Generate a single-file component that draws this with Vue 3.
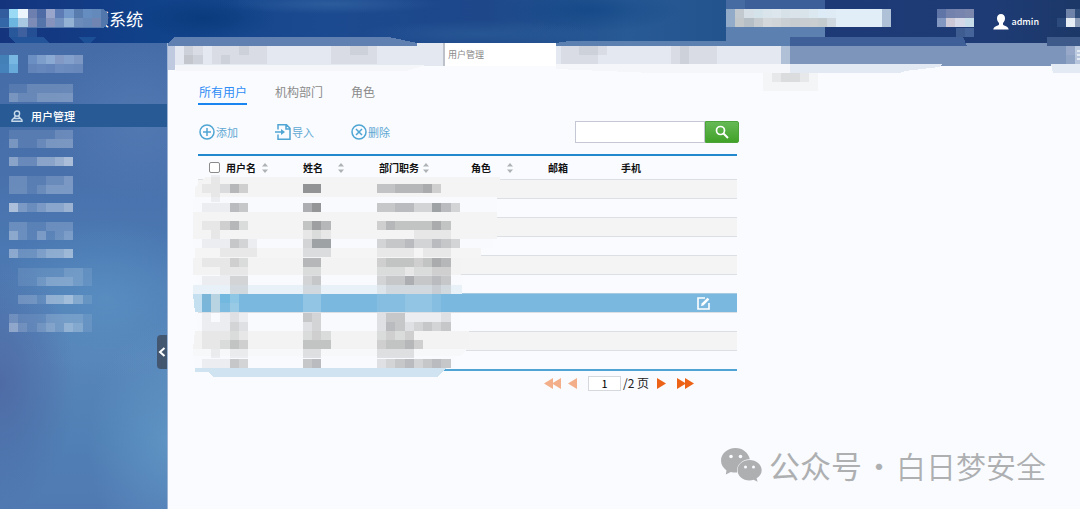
<template>
  <div class="app">
    <header class="header">
      <h1 class="title">版系统</h1>
      <a href="#" class="account">
        <svg class="avatar" viewBox="0 0 16 16">
          <path d="M8 0C5.500 0 4 1.800 4 4.300c0 2 .8 3.600 2 4.600v1.500C5.500 12 .5 11.800.3 15.500h15.400C15.500 11.800 10.500 12 10 10.400V8.900c1.200-1 2-2.600 2-4.600C12 1.800 10.500 0 8 0z" fill="#fff" />
        </svg>
        admin
      </a>
    </header>

    <!-- скрытые части шапки и вкладок -->
    <svg class="mask mask-brand" width="168" height="46" shape-rendering="crispEdges">
      <path d="M0 9h104l4 5v9l-4 5H0z" fill="#5277ad" />
      <path d="M9 37h35l5 6h14l2 2H18z" fill="#23549a" />
      <path d="M79 37h18l-10 9z" fill="#1c5096" />
      <rect v-for="(c, i) in cells(brandMask)" :key="i" v-bind="c" />
    </svg>
    <svg class="mask mask-tabs" width="290" height="42" shape-rendering="crispEdges">
      <path d="M5 11L15 2h214l28 6v3z" fill="#5f80b1" />
      <path d="M5 11h10v24H5z" fill="#bfcae0" />
      <path d="M15 30h251l-20 6H16z" fill="#f5f6f9" />
      <rect v-for="(c, i) in cells(tabMask)" :key="i" v-bind="c" />
    </svg>
    <svg class="mask mask-right" width="527" height="92" shape-rendering="crispEdges">
      <path d="M3 43L16 41H173V0h99v37h-35v9H3z" fill="#5c80b0" />
      <path d="M173 0h19v9h-19z" fill="#456ba2" />
      <path d="M192 0h80v9h-80z" fill="#3c5f99" />
      <path d="M237 37h173l4 9H237z" fill="#3f5f98" />
      <path d="M494 37h33v9h-33z" fill="#3d5a8b" />
      <path d="M237 64h152l-3 3-34 4-5 2H237z" fill="#e3e9f3" />
      <path d="M498 64h29v9h-27z" fill="#e4eaf3" />
      <path d="M3 64h234v9H100l-97-4z" fill="#f5f6fa" />
      <path d="M210 73h55v18h-55z" fill="#f4f5f6" />
      <rect v-for="(c, i) in cells(rightMask)" :key="i" v-bind="c" />
      <path d="M524 50h3v2h-3zM524 54h3v2h-3zM524 58h3v2h-3z" fill="#e4eaf3" />
    </svg>

    <div class="body">
      <aside class="sidebar">
        <ul class="menu">
          <li v-for="(item, i) in menu" :key="i" class="menu-item" :class="[item.type, { active: item.label }]">
            <a v-if="item.label" href="#" class="menu-link">
              <svg class="menu-icon" viewBox="0 0 12 12" fill="none" stroke="#c9daeb" stroke-width="1.400">
                <circle cx="6" cy="3.600" r="2.600" />
                <path d="M4.500 6L3.500 7.500 1 10v1.300h10V10L8.500 7.500 7.500 6M3.500 8.500h5" />
              </svg>
              {{ item.label }}
            </a>
            <svg v-else :width="110" :height="item.mask.length * 9" shape-rendering="crispEdges">
              <rect v-for="(c, j) in cells(item.mask)" :key="j" v-bind="c" />
            </svg>
          </li>
        </ul>
        <button class="collapse" aria-label="收起">
          <svg viewBox="0 0 8 10" fill="none" stroke="#fff" stroke-width="2"><path d="M6.500 1L2 5l4.500 4" /></svg>
        </button>
      </aside>

      <main class="main">
        <nav class="tabs">
          <div class="tab-space"></div>
          <a href="#" class="tab">用户管理</a>
          <div class="tab-rest"></div>
        </nav>

        <section class="panel">
          <div class="views">
            <a v-for="(v, i) in views" :key="v" href="#" class="view" :class="{ current: i === 0 }">{{ v }}</a>
          </div>

          <div class="toolbar">
            <button class="tool">
              <svg viewBox="0 0 16 16"><circle cx="8" cy="8" r="7" /><path d="M8 4v8M4 8h8" /></svg>
              添加
            </button>
            <button class="tool">
              <svg viewBox="0 0 16 16"><path d="M3 5.500V.8h8.500L15 4.200v11H3v-4.700M11 1v4h4M0 8h7.500" /><path d="M6 5l4 3-4 3z" class="solid" /></svg>
              导入
            </button>
            <button class="tool">
              <svg viewBox="0 0 16 16"><circle cx="8" cy="8" r="7" /><path d="M5 5l6 6M11 5l-6 6" /></svg>
              删除
            </button>
            <form class="search" @submit.prevent>
              <input v-model="keyword" type="text" aria-label="搜索" class="search-input" />
              <button class="search-btn" aria-label="搜索">
                <svg viewBox="0 0 14 14" fill="none" stroke="#fff"><circle cx="5.500" cy="5.500" r="4" stroke-width="1.700" /><path d="M8.500 8.500L13 13" stroke-width="2" /></svg>
              </button>
            </form>
          </div>

          <div class="table-box">
            <table class="table">
              <thead>
                <tr>
                  <th v-for="col in columns" :key="col.label" :class="col.name">
                    <div class="th-inner">
                      <label v-if="col.name === 'user'" class="check"><input type="checkbox" />{{ col.label }}</label>
                      <span v-else>{{ col.label }}</span>
                      <svg v-if="col.sort" class="sort" viewBox="0 0 6 10"><path d="M3 0l3 3.500H0zM3 10l3-3.500H0z" fill="#aeb2b6" /></svg>
                    </div>
                  </th>
                </tr>
              </thead>
              <tbody>
                <tr v-for="n in 10" :key="n" :class="{ selected: n === 7 }">
                  <td v-for="k in 6" :key="k"></td>
                  <td>
                    <button v-if="n === 7" class="edit" aria-label="编辑">
                      <svg viewBox="0 0 13 13" fill="none" stroke="#fff" stroke-width="1.600">
                        <path d="M8 1H1v11h11V6" />
                        <path d="M4 9l.6-2.400L10.500.7l1.800 1.800L6.400 8.400z" fill="#fff" stroke="none" />
                      </svg>
                    </button>
                  </td>
                </tr>
              </tbody>
            </table>
            <svg class="mask mask-table" width="310" height="202" shape-rendering="crispEdges">
              <path d="M12 2h295v20H2V12z" fill="#f4f4f5" />
              <path d="M2 22h302v15H0v-9z" fill="#f9fafd" />
              <path d="M0 37h304v27H0z" fill="#f4f4f4" />
              <path d="M0 64h300v9H0z" fill="#f9fafd" />
              <path d="M2 73h286v10H2z" fill="#f5f5f6" />
              <path d="M0 83h268v17H0z" fill="#f3f3f3" />
              <path d="M3 100h267v10H3z" fill="#f9fafd" />
              <path d="M0 110h269v9H0z" fill="#e9f1f8" />
              <path d="M0 119h9v18H2z" fill="#c3dff0" />
              <path d="M2 138h265v18H5z" fill="#f9fafd" />
              <path d="M2 156h274v18H0z" fill="#f3f3f3" />
              <path d="M0 174h275l-8 7H0z" fill="#f7f8fa" />
              <path d="M0 181h262v12H2z" fill="#f9fafd" />
              <path d="M2 193h251l-8 9H21l-6-5H2z" fill="#cfe3f1" />
              <rect v-for="(c, i) in cells(tableMask)" :key="i" v-bind="c" />
            </svg>
          </div>

          <div class="pager">
            <button class="page-btn wide" disabled aria-label="首页"><svg viewBox="0 0 17 11"><path d="M9 0v11L0 5.500zM17 0v11L8 5.500z" /></svg></button>
            <button class="page-btn" disabled aria-label="上一页"><svg viewBox="0 0 10 11"><path d="M9 0v11L0 5.500z" /></svg></button>
            <label class="page-no"><input v-model="page" type="text" class="page-input" />/2 页</label>
            <button class="page-btn" aria-label="下一页"><svg viewBox="0 0 10 11"><path d="M1 0v11l9-5.500z" /></svg></button>
            <button class="page-btn wide" aria-label="末页"><svg viewBox="0 0 17 11"><path d="M0 0v11l9-5.500zM8 0v11l9-5.500z" /></svg></button>
          </div>
        </section>
      </main>
    </div>

    <div class="watermark">
      <svg class="wechat" viewBox="0 0 41 34">
        <path d="M14.500 0C6.500 0 0 5.600 0 12.600c0 4 2.100 7.500 5.500 9.800L4.800 26.500l5-2.500c1.600.4 3.200.6 5 .6l1.300-.1C15 17 21.500 11 28.800 11.200 27.500 4.700 21.500 0 14.500 0z" fill="#adafb1" />
        <path d="M28.500 12C21.700 12 16.500 16.600 16.500 22.200s5.200 10.200 12 10.200c1.400 0 2.800-.2 4.100-.6l4 2-1-3.500c3.100-1.900 5.100-4.800 5.100-8.100C40.700 16.600 35.200 12 28.500 12z" fill="#adafb1" />
        <g fill="#f9fbfe">
          <circle cx="10" cy="8.500" r="1.800" />
          <circle cx="19.500" cy="8.500" r="1.800" />
          <circle cx="24.500" cy="19" r="1.500" />
          <circle cx="32.500" cy="19" r="1.500" />
        </g>
      </svg>
      <span class="wm-kind">公众号</span>
      <span class="wm-dot">·</span>
      <span class="wm-name">白日梦安全</span>
    </div>
  </div>
</template>

<script setup>
import { ref } from 'vue'

const keyword = ref('')
const page = ref('1')

const views = ['所有用户', '机构部门', '角色']

const columns = [
  { name: 'user', label: '用户名', sort: true },
  { name: 'name', label: '姓名', sort: true },
  { name: 'dept', label: '部门职务', sort: true },
  { name: 'role', label: '角色', sort: true },
  { name: 'mail', label: '邮箱' },
  { name: 'phone', label: '手机' },
  { name: 'action', label: '' },
]

// цифра = плотность клетки, точка = пустая клетка
const CELL = 9.19
const tones = {
  light: (n) => `rgba(255, 255, 255, ${n * 0.09})`,
  dark: (n) => `rgba(90, 92, 94, ${n * 0.08})`,
}

function cells(lines) {
  const out = []
  lines.forEach((line, i) => {
    const { x = 0, y = i * 9, map, colors, tone = 'light' } = typeof line === 'string' ? { map: line } : line
    const list = colors ? colors.split(' ') : map.split('')
    list.forEach((v, k) => {
      if (v === '.' || v === '0') return
      const left = Math.round(x + k * CELL)
      const right = Math.round(x + (k + 1) * CELL)
      out.push({ x: left, y, width: right - left, height: 9, fill: colors ? '#' + v : tones[tone](v) })
    })
  })
  return out
}

const menu = [
  { type: 'group', mask: [
    { x: -9, y: 0, colors: '4380b8 78b7e2 . 6b8fc2 7d9ecb 8aaad4 8298c5 839fcc 7d97c5' },
    { x: -9, y: 9, colors: '4582bc 68abdb . 6284b9 6587bc 6384ba 6c8bbf 6a8abd 6888bc' },
  ] },
  { type: 'item', mask: ['1122222', '3223333'] },
  { type: 'item', label: '用户管理' },
  { type: 'item', mask: ['1111122', '3112333'] },
  { type: 'item', mask: ['4224456'] },
  { type: 'item', mask: ['2211223', '2212333'] },
  { type: 'item', mask: ['6323445'] },
  { type: 'item', mask: ['2211222', '4213123'] },
  { type: 'item', mask: ['4223445'] },
  { type: 'item', mask: ['.11111221', '.11233321'] },
  { type: 'item', mask: ['.22144531'] },
  { type: 'item', mask: ['211122221', '421232431'] },
]

const brandMask = [
  { x: 0, y: 9, colors: '315d9f 9bdaf5 edf5fc 6c7fae 4e6ba5 9aa5cc 5d7bb5 7299ca 587cae 658dc0 6489bb' },
  { x: 0, y: 18, colors: '3467a8 6bb5df a9c9e2 7c8cb7 5574aa 8593bd 7492bf 94b3d4 6b8cbb 6688b8 7185b2' },
  { x: 9, y: 28, colors: '28589a 3f609f 254f94' },
]

const tabMask = [
  { x: 15, y: 11, map: '0210111211', tone: 'dark' },
  { x: 15, y: 20, map: '0320121111', tone: 'dark' },
  { x: 162, y: 11, map: '011221', tone: 'dark' },
  { x: 162, y: 20, map: '011111', tone: 'dark' },
]

const rightMask = [
  { x: 8, y: 46, map: '11221', tone: 'dark' },
  { x: 8, y: 55, map: '11110', tone: 'dark' },
  { x: 118, y: 46, map: '12111', tone: 'dark' },
  { x: 118, y: 55, map: '12111', tone: 'dark' },
  { x: 173, y: 9, colors: '91abc9 c2c9cf d5dfe5 d4e2ea d9e4eb dce6ec d7e2e8 d9e3e9 d9e4ea dce8f0 dcebf5 deebf4 e1edf7 e1edf7 e1edf7 e1edf7 e1edf7 afc1d7' },
  { x: 173, y: 18, colors: '91abc9 c2c8ca b7bfc6 c6ccd0 d4d8da d1d5d7 c9cfd2 c6cccf c7cdd0 c9ced0 c5ccd0 d0d9df e1edf7 e1edf7 e1edf7 e1edf7 e1edf7 afc1d7' },
  { x: 228, y: 46, colors: 'afc0d7' },
  { x: 228, y: 55, colors: 'afc0d7' },
  { x: 384, y: 9, colors: '5f75a8 7382ad 7784ad 7c87ae' },
  { x: 384, y: 18, colors: '8398c1 ccc8d6 d5d9e7 c7dce9' },
  { x: 403, y: 28, colors: '3f5c91 45649a' },
  { x: 513, y: 9, colors: '7084a9 324f7c' },
  { x: 504, y: 18, colors: '2c4a7c e7edf4 8b9cb9' },
  { x: 513, y: 46, colors: '97a8c8 bdcbe0' },
  { x: 513, y: 55, colors: '8fa3c5 b6c5dc' },
  { x: 219, y: 73, map: '12210', tone: 'dark' },
]

const tableRows = [
  [0, '010', '', ''],
  [9, '11253', '88', '4455563'],
  [18, '010', '', ''],
  [28, '11154', '68', '445533753'],
  [46, '11352', '475', '35444464'],
  [55, '01', '121', '00001111'],
  [64, '111431', '377', '344533543'],
  [73, '001111', '222', '11110111'],
  [83, '11132', '55', '34443465'],
  [92, '00111', '22', '22212233'],
  [101, '11133', '34', '34464454'],
  [110, '00022', '22', '12222232'],
  [138, '10121', '43', '24411112'],
  [147, '11132', '23', '25423434'],
  [156, '11121', '232', '2323'],
  [165, '11243', '444', '34453'],
  [174, '01011', '22', '2222'],
  [184, '11143', '45', '23453454'],
]

const tableMask = [
  ...tableRows.flatMap(([y, user, name, dept]) => [
    { x: 9, y, map: user, tone: 'dark' },
    { x: 110, y, map: name, tone: 'dark' },
    { x: 184, y, map: dept, tone: 'dark' },
  ]),
  { x: 9, y: 119, colors: '7bb5d8 b8d4e3 73b8df 8ec6e5' },
  { x: 9, y: 128, colors: '79b6da b8d3e2 7dbbe0 98cae6' },
  ...[119, 128].flatMap((y) => [
    { x: 110, y, map: '22' },
    { x: 184, y, map: '1112221' },
  ]),
]
</script>

<style>
body {
  margin: 0;
}
</style>

<style scoped>
.app {
  position: relative;
  display: flex;
  flex-direction: column;
  min-height: 100vh;
  font-family: "Noto Sans CJK SC", "Liberation Sans", sans-serif;
  font-size: 12px;
  background: #f9fbfe;
}

button {
  padding: 0;
  border: none;
  background: none;
  font-family: inherit;
  cursor: pointer;
}

a {
  text-decoration: none;
}

svg {
  display: block;
}

.header {
  display: flex;
  align-items: center;
  justify-content: space-between;
  box-sizing: border-box;
  height: 43px;
  padding: 0 41px 5px 92px;
  color: #fff;
  background:
    radial-gradient(ellipse 70px 22px at 205px 18px, rgba(4, 53, 115, 0.6), transparent),
    radial-gradient(ellipse 110px 10px at 330px 4px, rgba(70, 120, 175, 0.4), transparent),
    radial-gradient(ellipse 120px 14px at 480px 34px, rgba(55, 110, 165, 0.4), transparent),
    radial-gradient(ellipse 90px 22px at 590px 10px, rgba(12, 66, 130, 0.6), transparent),
    linear-gradient(90deg, #15347e 0%, #10428a 14%, #1c4a90 30%, #1d4789 45%, #285a95 58%, #23538d 68%, #1d3a77 75%, #1e3b75 92%, #1c3868 100%);
}

.title {
  margin: 0;
  font-size: 17px;
  font-weight: 400;
  line-height: 24px;
}

.account {
  display: flex;
  align-items: center;
  gap: 2px;
  padding-top: 5px;
  color: #fff;
  font-family: "Noto Sans CJK SC", sans-serif;
  font-size: 9px;
  font-weight: 500;
}

.avatar {
  width: 16px;
  height: 16px;
}

.mask {
  position: absolute;
  pointer-events: none;
}

.mask-brand {
  top: 0;
  left: 0;
}

.mask-tabs {
  top: 35px;
  left: 160px;
}

.mask-right {
  top: 0;
  right: 0;
}

.body {
  display: flex;
  flex: 1;
}

.sidebar {
  position: relative;
  box-sizing: border-box;
  flex: none;
  width: 168px;
  border-right: 1px solid #9db4d4;
  background:
    radial-gradient(ellipse 75px 130px at 0 340px, rgba(76, 96, 158, 0.7), transparent),
    radial-gradient(ellipse 110px 80px at 105px 255px, rgba(96, 156, 203, 0.5), transparent),
    radial-gradient(ellipse 90px 80px at 140px 80px, rgba(92, 130, 185, 0.5), transparent),
    radial-gradient(ellipse 80px 120px at 168px 400px, rgba(104, 160, 205, 0.6), transparent),
    linear-gradient(180deg, #456ca7 0%, #4870ab 25%, #4b78b2 45%, #5785b9 68%, #5080b5 85%, #5079b2 100%);
}

.menu {
  margin: 0;
  padding: 4px 0 0;
  list-style: none;
}

.menu-item {
  display: flex;
  align-items: center;
  height: 23px;
  padding-left: 9px;
}

.menu-item.group {
  height: 34px;
}

.menu-item.group svg {
  overflow: visible;
}

.menu-item.active {
  background: #285b95;
}

.menu-link {
  display: flex;
  align-items: center;
  gap: 8px;
  padding-left: 2px;
  color: #fff;
  font-size: 11px;
  font-weight: 500;
}

.menu-icon {
  width: 12px;
  height: 12px;
}

.collapse {
  position: absolute;
  top: 292px;
  right: 0;
  display: flex;
  align-items: center;
  justify-content: center;
  width: 10px;
  height: 34px;
  border-radius: 4px 0 0 4px;
  background: #435771;
}

.collapse svg {
  width: 8px;
  height: 10px;
}

.main {
  flex: 1;
  min-width: 0;
}

.tabs {
  display: flex;
  height: 23px;
  background: #e4e8f1;
}

.tab-space {
  flex: none;
  width: 275px;
}

.tab {
  box-sizing: border-box;
  width: 113px;
  padding-left: 3px;
  border-left: 2px solid #bcc1ca;
  color: #888;
  font-size: 9px;
  line-height: 23px;
  background: #fff;
}

.tab-rest {
  flex: 1;
  background: linear-gradient(90deg, #e4e8f1 234px, #7d95bb 234px);
}

.panel {
  max-width: 541px;
  padding: 16px 0 0 30px;
}

.views {
  display: flex;
  gap: 27px;
}

.view {
  padding: 0 0 2px 1px;
  border-bottom: 2px solid transparent;
  color: #8b8b8b;
  font-size: 12px;
  line-height: 19px;
}

.view.current {
  color: #2d8cf5;
  border-color: #1a85ee;
}

.toolbar {
  display: flex;
  align-items: center;
  margin-top: 16px;
}

.tool {
  display: flex;
  align-items: center;
  gap: 1px;
  width: 76px;
  padding-left: 1px;
  color: #5fa8d3;
  font-size: 11px;
  line-height: 16px;
}

.tool svg {
  width: 16px;
  height: 16px;
  fill: none;
  stroke: #4fa5d3;
  stroke-width: 1.5;
}

.tool .solid {
  fill: #4fa5d3;
  stroke: none;
}

.search {
  display: flex;
  flex: none;
  margin-left: auto;
}

.search-input {
  box-sizing: border-box;
  width: 130px;
  height: 22px;
  padding: 0 4px;
  border: 1px solid #c5c8d4;
  font-size: 11px;
  background: #fff;
  outline: none;
}

.search-btn {
  display: flex;
  align-items: center;
  justify-content: center;
  box-sizing: border-box;
  width: 34px;
  height: 22px;
  border: 1px solid #4ba33a;
  border-radius: 0 2px 2px 0;
  background: linear-gradient(#66b956, #41a228);
}

.search-btn svg {
  width: 14px;
  height: 14px;
}

.table-box {
  position: relative;
  margin: 11px 2px 0 0;
}

.table {
  width: 100%;
  border-top: 2px solid #2389cf;
  border-bottom: 2px solid #4fa3d5;
  border-spacing: 0;
  table-layout: fixed;
}

th {
  height: 23px;
  padding: 0;
  color: #111;
  font-size: 10px;
  font-weight: 700;
  line-height: 16px;
  text-align: left;
}

.user {
  width: 105px;
}

.name {
  width: 76px;
}

.dept {
  width: 92px;
}

.role {
  width: 77px;
}

.mail {
  width: 73px;
}

.action {
  width: 40px;
}

.th-inner {
  display: flex;
  align-items: center;
  justify-content: space-between;
  padding-right: 35px;
  white-space: nowrap;
}

.dept .th-inner {
  padding-right: 42px;
}

.check {
  display: flex;
  align-items: center;
  gap: 6px;
  padding-left: 11px;
}

.check input {
  box-sizing: border-box;
  appearance: none;
  width: 11px;
  height: 11px;
  margin: 0;
  border: 1px solid #8b8b8b;
  border-radius: 2px;
  background: #fff;
}

.sort {
  width: 6px;
  height: 10px;
}

td {
  box-sizing: border-box;
  height: 19px;
  padding: 0;
  border-top: 1px solid #dcdfe4;
}

tbody tr:nth-child(odd) {
  background: #f4f4f4;
}

tbody tr.selected {
  background: #7ab8df;
}

.selected td {
  border-color: #a5c9e0;
}

.edit {
  display: block;
}

.edit svg {
  width: 13px;
  height: 13px;
}

.mask-table {
  top: 21px;
  left: -5px;
}

.pager {
  display: flex;
  align-items: center;
  justify-content: flex-end;
  gap: 7px;
  margin-top: 3px;
  padding-right: 45px;
}

.page-btn {
  width: 10px;
  height: 11px;
}

.page-btn.wide {
  width: 17px;
}

.page-btn svg {
  width: 100%;
  height: 11px;
  fill: #ec6216;
}

.page-btn:disabled svg {
  fill: #f3ae8a;
}

.page-btn:last-child {
  margin-left: 4px;
}

.page-no {
  display: flex;
  align-items: center;
  gap: 2px;
  margin-left: 3px;
  color: #222;
  font-size: 12px;
  line-height: 18px;
}

.page-input {
  box-sizing: border-box;
  width: 33px;
  height: 15px;
  padding: 0;
  border: 1px solid #d5d9de;
  font-family: inherit;
  font-size: 11px;
  text-align: center;
  background: #fff;
}

.watermark {
  position: absolute;
  right: 34px;
  bottom: 23px;
  display: flex;
  align-items: center;
  color: #adafb1;
  font-size: 30px;
  line-height: 42px;
}

.wechat {
  width: 41px;
  height: 34px;
  margin-right: 7px;
}

.wm-kind {
  font-size: 31px;
}

.wm-dot {
  width: 34px;
  text-align: center;
}

.wm-name {
  font-weight: 350;
}
</style>
